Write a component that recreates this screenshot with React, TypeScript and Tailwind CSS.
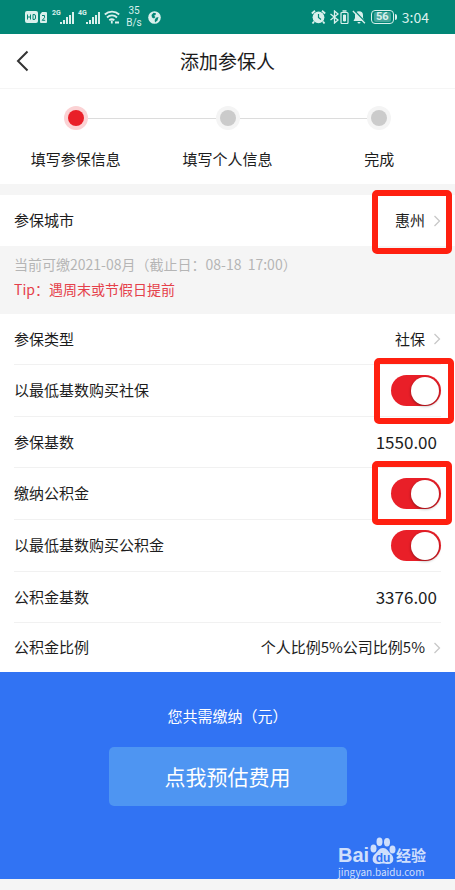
import { ReactNode, useId, useState } from "react";

const Chevron = () => (
	<svg className="h-3 w-2 shrink-0" viewBox="0 0 8 12" fill="none" aria-hidden="true">
		<path d="M1.5 1 6.5 6l-5 5" stroke="#c8c8c8" strokeWidth="1.3" />
	</svg>
);

const Signal = ({ label }: { label: string }) => (
	<div className="flex items-start">
		<span className="w-2 font-['Roboto',sans-serif] text-[7px] leading-none font-bold">{label}</span>
		<svg className="mt-0.5 h-3 w-[14px]" viewBox="0 0 14 12" fill="currentColor" aria-hidden="true">
			<rect x="0" y="10" width="2" height="2" />
			<rect x="3" y="8" width="2" height="4" />
			<rect x="6" y="5" width="2" height="7" />
			<rect x="9" y="3" width="2" height="9" />
			<rect x="12" y="0" width="2" height="12" />
		</svg>
	</div>
);

const StatusBar = () => (
	<div className="flex h-[34px] items-center justify-between bg-[#028676] pr-[26px] pl-[25px] text-[#d9f0ec]">
		<div className="flex items-center gap-1">
			<svg className="h-3 w-[23px]" viewBox="0 0 23 12" aria-label="HD 2">
				<rect width="13" height="12" rx="2" fill="currentColor" />
				<path
					d="M2.500 3.500v5M5.500 3.500v5M2.500 6h3M8 3.500v5h1a1.500 1.500 0 0 0 1.500-1.500V5A1.500 1.500 0 0 0 9 3.500z"
					fill="none"
					stroke="#028676"
				/>
				<path d="M15 3.500 17 1h4a1 1 0 0 1 1 1v9a1 1 0 0 1-1 1h-5a1 1 0 0 1-1-1z" fill="currentColor" />
				<path d="M17 4.500h2.500v2.200L17.200 9.300h3" fill="none" stroke="#028676" />
			</svg>
			<Signal label="2G" />
			<Signal label="4G" />
			<svg
				className="h-[14px] w-4"
				viewBox="0 0 16 14"
				fill="none"
				stroke="currentColor"
				strokeWidth="1.800"
				aria-hidden="true"
			>
				<path d="M.8 4.500a10.500 10.500 0 0 1 14.400 0M3 7.500a7 7 0 0 1 10 0M5.300 10.200a4 4 0 0 1 5 0" />
				<path d="M7.800 10.500v3M11 12.500h4" />
			</svg>
			<div className="ml-0.5 w-4 text-center font-['Roboto',sans-serif] text-[10px] leading-3">
				<div>35</div>
				<div>B/s</div>
			</div>
			<svg className="ml-0.5 h-[13px] w-[13px]" viewBox="0 0 13 13" aria-hidden="true">
				<circle cx="6.500" cy="6.500" r="6.300" fill="currentColor" />
				<path d="M5.500 1.800 8 2.200 7.500 4l-1.500.8L7.500 6 6 7.500 4 6.500 3.500 4zM8 6.800l2.500-.8-1 3.500L7 11.500l-.3-2.500z" fill="#028676" />
			</svg>
		</div>
		<div className="flex items-center gap-[3px]">
			<svg className="h-[14px] w-[15px]" viewBox="0 0 15 14" aria-hidden="true">
				<path
					d="M.8 3.500 4 .8M14.200 3.500 11 .8M3 11.500l-1.500 2M12 11.500l1.500 2"
					stroke="currentColor"
					strokeWidth="1.800"
				/>
				<circle cx="7.500" cy="7.300" r="5.900" fill="currentColor" />
				<path d="M7.500 4v3.500l2.500 2" stroke="#028676" strokeWidth="1.200" fill="none" />
			</svg>
			<svg className="h-[14px] w-5" viewBox="0 0 20 14" fill="none" stroke="currentColor" aria-hidden="true">
				<path d="M1.500 4 9 10 5.500 13V1L9 4 1.500 10" strokeWidth="1.300" />
				<rect x="12" y="2.500" width="7" height="11" rx="1" strokeWidth="1.200" />
				<path d="M13.500 1h4" strokeWidth="1.500" />
				<path d="M14.500 5h2v6h-2z" fill="currentColor" />
			</svg>
			<svg className="h-[14px] w-[14px]" viewBox="0 0 14 14" aria-hidden="true">
				<path
					d="M7 1.200a4 4 0 0 1 4 4V8l1.500 3h-11L3 8V5.200a4 4 0 0 1 4-4zM5.500 12h3a1.500 1.500 0 0 1-3 0z"
					fill="currentColor"
				/>
				<path d="m2 .2 12 12.500" stroke="#028676" strokeWidth="1.400" />
				<path d="m.9 1 12 12.300" stroke="currentColor" strokeWidth="1.300" />
			</svg>
			<div className="ml-0.5 flex items-center gap-px">
				<span className="flex h-[14px] w-[23px] items-center justify-center rounded-[4px] border border-current">
					<span className="rounded-[2px] bg-[#d9f0ec]/30 px-0.5 font-['Roboto',sans-serif] text-[11px] leading-[10px] font-bold">
						56
					</span>
				</span>
				<span className="h-1.5 w-0.5 rounded-r bg-current" />
			</div>
			<span className="ml-0.5 text-[14px] leading-none">3:04</span>
		</div>
	</div>
);

const steps = ["填写参保信息", "填写个人信息", "完成"];

const Steps = () => (
	<ol className="grid grid-cols-3 bg-white pt-[17px] pb-[13px]">
		{steps.map((step, i) => (
			<li key={step} className="flex flex-col items-center">
				<div className="flex w-full items-center">
					<span className={`h-px flex-1 ${i > 0 ? "bg-[#dcdcdc]" : ""}`} />
					<span
						className={`flex size-6 items-center justify-center rounded-full ${i === 0 ? "bg-[#fbd2d4]" : "bg-[#f4f4f4]"}`}
					>
						<span className={`size-4 rounded-full ${i === 0 ? "bg-[#e91f28]" : "bg-[#cbcbcb]"}`} />
					</span>
					<span className={`h-px flex-1 ${i < steps.length - 1 ? "bg-[#dcdcdc]" : ""}`} />
				</div>
				<span className="mt-[17px] text-[15px] leading-6">{step}</span>
			</li>
		))}
	</ol>
);

const Highlight = ({ className }: { className: string }) => (
	<span className={`pointer-events-none absolute z-10 w-20 rounded-[5px] border-[6px] border-[#ff2010] ${className}`} />
);

interface RowProps {
	label: string;
	children: ReactNode;
	className?: string;
}

const Row = ({ label, children, className = "h-[51px] border-b" }: RowProps) => (
	<div className={`relative mx-3.5 flex items-center justify-between border-[#f1f1f1] text-[15px] ${className}`}>
		<span>{label}</span>
		{children}
	</div>
);

const LinkValue = ({ children }: { children: ReactNode }) => (
	<button type="button" className="flex items-center gap-2">
		{children}
		<Chevron />
	</button>
);

const SwitchRow = ({ label, children }: { label: string; children?: ReactNode }) => {
	const id = useId();
	const [checked, setChecked] = useState(true);

	return (
		<div className="relative mx-3.5 flex h-[52px] items-center justify-between border-b border-[#f1f1f1] text-[15px]">
			<label htmlFor={id}>{label}</label>
			<input
				id={id}
				type="checkbox"
				role="switch"
				checked={checked}
				onChange={(e) => setChecked(e.target.checked)}
				className="flex h-[31px] w-[50px] cursor-pointer appearance-none items-center rounded-full bg-[#d5d5d5] px-0.5 before:size-7 before:rounded-full before:bg-white before:shadow-[0_1px_3px_rgba(0,0,0,0.4)] checked:justify-end checked:bg-[#e91f28]"
			/>
			{children}
		</div>
	);
};

const Watermark = () => (
	<div className="absolute right-[29px] bottom-0 w-[88px] text-[#cfdffc]">
		<div className="flex items-end justify-between">
			<span className="font-['Liberation_Sans',sans-serif] text-[20px] leading-[20px] font-bold">Bai</span>
			<svg className="h-7 w-[26px]" viewBox="0 0 26 28" fill="currentColor" aria-hidden="true">
				<ellipse cx="3.500" cy="11.500" rx="3" ry="4" />
				<ellipse cx="9.500" cy="4.800" rx="3" ry="4.200" />
				<ellipse cx="17" cy="5.200" rx="3" ry="4.200" />
				<ellipse cx="22.500" cy="12.500" rx="3" ry="4" />
				<path d="M13 11c4 0 5 3.500 8 6 3.500 3 3.500 10-3 10-2 0-3-.5-5-.5s-3 .5-5 .5c-6.500 0-6.500-7-3-10 3-2.500 4-6 8-6z" />
				<text
					x="13"
					y="24.500"
					textAnchor="middle"
					fontSize="12"
					fontWeight="bold"
					fill="#3173f3"
					fontFamily="Liberation Sans"
				>
					du
				</text>
			</svg>
			<span className="text-[15px] leading-[20px] font-bold">经验</span>
		</div>
		<div className="text-[10px] leading-[14px]">jingyan.baidu.com</div>
	</div>
);

const App = () => {
	return (
		<div className="min-h-screen bg-[#f5f5f5] font-['Noto_Sans_CJK_SC',sans-serif] text-[#1c1c1c]">
			<StatusBar />
			<header className="grid h-[55px] grid-cols-[1fr_auto_1fr] items-center border-b border-[#f5f5f5] bg-white px-4">
				<button type="button" aria-label="返回">
					<svg className="h-[22px] w-[13px]" viewBox="0 0 13 22" fill="none">
						<path d="M11.500 1.500 2 11l9.500 9.500" stroke="#333" strokeWidth="2" />
					</svg>
				</button>
				<h1 className="text-[19px]">添加参保人</h1>
			</header>
			<Steps />

			<section className="mt-[11px] bg-white">
				<Row label="参保城市" className="h-[51px]">
					<LinkValue>惠州</LinkValue>
					<Highlight className="-top-[5px] -right-[11px] h-16" />
				</Row>
			</section>

			<div className="px-3.5 pt-1.5 pb-3 text-[14px] leading-[25px]">
				<p className="text-[#b5b5b5]">当前可缴2021-08月（截止日：08-18&nbsp; 17:00）</p>
				<p className="text-[#e5404a]">Tip：遇周末或节假日提前</p>
			</div>

			<section className="bg-white">
				<Row label="参保类型">
					<LinkValue>社保</LinkValue>
				</Row>
				<SwitchRow label="以最低基数购买社保">
					<Highlight className="-top-[7px] -right-[13px] h-[66px]" />
				</SwitchRow>
				<Row label="参保基数">
					<span className="pr-1 text-[17px]">1550.00</span>
				</Row>
				<SwitchRow label="缴纳公积金">
					<Highlight className="-top-[7px] -right-[11px] h-16" />
				</SwitchRow>
				<SwitchRow label="以最低基数购买公积金" />
				<Row label="公积金基数">
					<span className="pr-1 text-[17px]">3376.00</span>
				</Row>
				<Row label="公积金比例" className="h-[49px]">
					<LinkValue>个人比例5%公司比例5%</LinkValue>
				</Row>
			</section>

			<section className="relative flex flex-col items-center bg-[#3173f3] pt-8 pb-[73px] text-white">
				<p className="text-[15px] leading-6">您共需缴纳（元）</p>
				<button type="button" className="mt-[19px] h-[59px] w-[238px] rounded-[5px] bg-[#4e95f2] text-[21px]">
					点我预估费用
				</button>
				<Watermark />
			</section>
		</div>
	);
};

export default App;
